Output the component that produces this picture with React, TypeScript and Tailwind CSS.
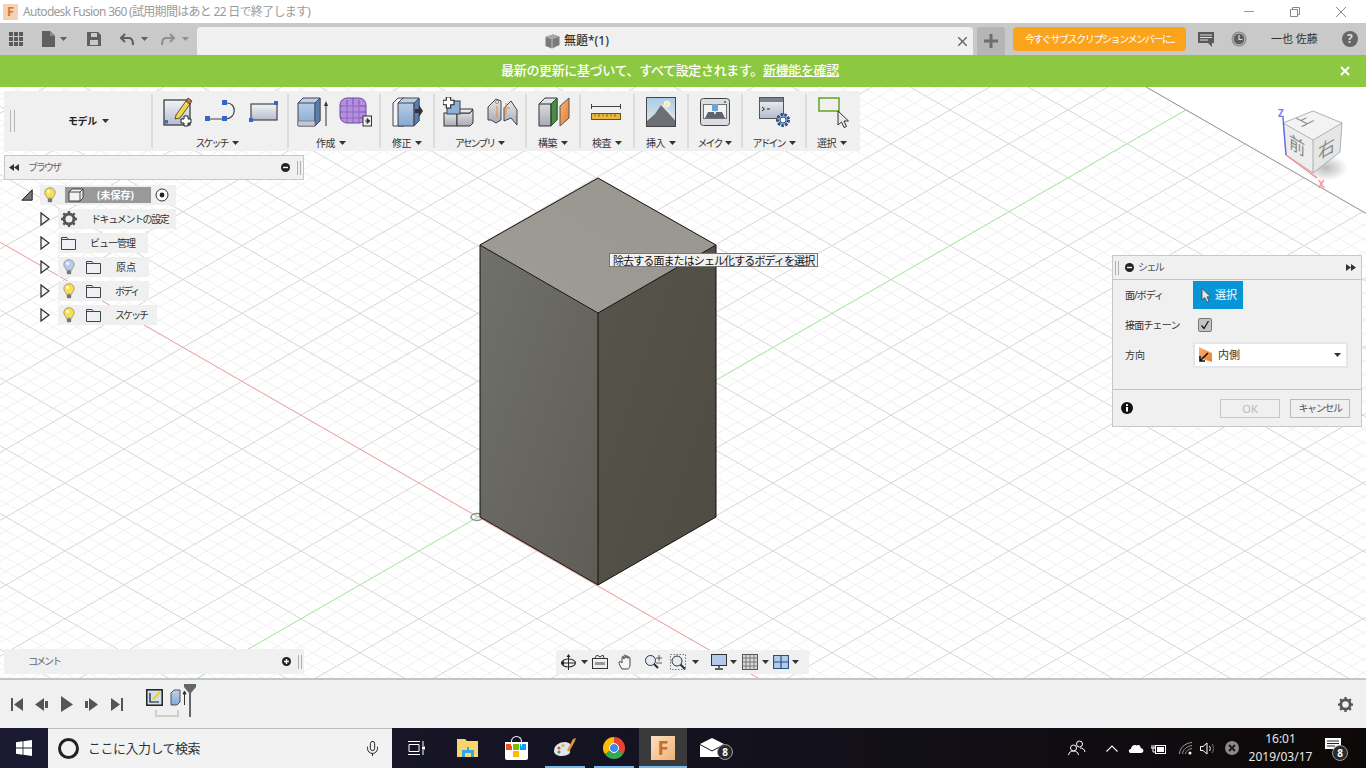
import React from "react";
import { Mic } from "lucide-react";

const O = { x: 478, y: 517 };
const K = 0.575;
const STEP = 11.8;
const LIMIT = 708;

// grid point from the two axes of the floor
const pt = (a: number, b: number) => ({ x: O.x + a + b, y: O.y + K * a - K * b });

const Seg = ({ a1, b1, a2, b2, color, width = 1 }: any) => {
  const p = pt(a1, b1);
  const q = pt(a2, b2);
  return <line x1={p.x} y1={p.y} x2={q.x} y2={q.y} stroke={color} strokeWidth={width} />;
};

const Floor = () => {
  const idx = Array.from({ length: 121 }, (_, i) => i - 60);
  return (
    <svg className="absolute inset-0" width="1366" height="593" viewBox="0 87 1366 593">
      <defs>
        <linearGradient id="faceTop" x1="0" y1="1" x2="1" y2="0">
          <stop offset="0" stopColor="#9e9c94" />
          <stop offset="1" stopColor="#98968e" />
        </linearGradient>
        <linearGradient id="faceLeft" x1="0" y1="0" x2="1" y2="1">
          <stop offset="0" stopColor="#70716a" />
          <stop offset="1" stopColor="#5e5d55" />
        </linearGradient>
        <linearGradient id="faceRight" x1="0" y1="0" x2="1" y2="1">
          <stop offset="0" stopColor="#57544c" />
          <stop offset="1" stopColor="#4e4b42" />
        </linearGradient>
      </defs>
      {idx.filter((i) => i % 5 !== 0).map((i) => (
        <g key={i}>
          <Seg a1={-LIMIT} b1={i * STEP} a2={LIMIT} b2={i * STEP} color="#f0f0f0" />
          <Seg a1={i * STEP} b1={-LIMIT} a2={i * STEP} b2={LIMIT} color="#f0f0f0" />
        </g>
      ))}
      {idx.filter((i) => i % 5 === 0).map((i) => (
        <g key={i}>
          <Seg a1={-LIMIT} b1={i * STEP} a2={LIMIT} b2={i * STEP} color="#d6d6d6" />
          <Seg a1={i * STEP} b1={-LIMIT} a2={i * STEP} b2={LIMIT} color="#d6d6d6" />
        </g>
      ))}
      <Seg a1={-LIMIT} b1={LIMIT} a2={LIMIT} b2={LIMIT} color="#9a9a9a" />
      <Seg a1={-LIMIT} b1={0} a2={LIMIT} b2={0} color="#f5a3a3" />
      <Seg a1={0} b1={-LIMIT} a2={0} b2={LIMIT} color="#a9f0a2" />
      <ellipse cx="477" cy="517" rx="6" ry="3.5" fill="none" stroke="#8d8d8d" strokeWidth="1.5" />
      <polygon points="598,178 716,245 598,313 480,245" fill="url(#faceTop)" />
      <polygon points="480,245 598,313 598,585 480,517" fill="url(#faceLeft)" />
      <polygon points="598,313 716,245 716,517 598,585" fill="url(#faceRight)" />
      <path d="M598 178L716 245V517L598 585L480 517V245ZM480 245L598 313L716 245M598 313V585" fill="none" stroke="#111" strokeWidth="1" />
    </svg>
  );
};

const Caret = ({ color = "#333", size = 7 }: { color?: string; size?: number }) => (
  <svg width={size} height={size - 3} viewBox="0 0 7 4" className="shrink-0">
    <path d="M0 0H7L3.5 4Z" fill={color} />
  </svg>
);

const Sheen = () => (
  <svg width="0" height="0" className="absolute">
    <defs>
      <linearGradient id="blueFace" x1="0" y1="0" x2="0" y2="1">
        <stop offset="0" stopColor="#c0d4ea" />
        <stop offset="1" stopColor="#86a9d2" />
      </linearGradient>
      <linearGradient id="paper" x1="0" y1="0" x2="0" y2="1">
        <stop offset="0" stopColor="#f2f4f8" />
        <stop offset="1" stopColor="#b4bccb" />
      </linearGradient>
      <linearGradient id="steel" x1="0" y1="0" x2="0" y2="1">
        <stop offset="0" stopColor="#e6e8ec" />
        <stop offset="1" stopColor="#a6aab2" />
      </linearGradient>
      <linearGradient id="sky" x1="0" y1="0" x2="0" y2="1">
        <stop offset="0" stopColor="#a9cde6" />
        <stop offset="1" stopColor="#e3e9e6" />
      </linearGradient>
      <linearGradient id="amber" x1="0" y1="0" x2="1" y2="1">
        <stop offset="0" stopColor="#f7b27c" />
        <stop offset="1" stopColor="#e77f2e" />
      </linearGradient>
    </defs>
  </svg>
);

const PlusMark = ({ x, y, s = 1 }: { x: number; y: number; s?: number }) => (
  <path
    transform={`translate(${x} ${y}) scale(${s})`}
    d="M3 0H7V3H10V7H7V10H3V7H0V3H3Z"
    fill="#fff"
    stroke="#222"
    strokeWidth="1"
  />
);

const SketchIcon = () => (
  <svg width="30" height="30" viewBox="0 0 30 30">
    <rect x="1" y="3" width="26" height="25" fill="url(#paper)" stroke="#333" strokeWidth="1.2" />
    <rect x="1.5" y="23" width="3.5" height="3.5" fill="#3a6fc9" />
    <path d="M13 18L23 4L27 7L17 21L12 22Z" fill="#f5d64a" stroke="#333" strokeWidth="0.8" />
    <path d="M23 4L25 1L29 4L27 7Z" fill="#c97a4a" stroke="#333" strokeWidth="0.8" />
    <PlusMark x={18} y={19} />
  </svg>
);

const LineIcon = () => (
  <svg width="32" height="24" viewBox="0 0 32 24">
    <path d="M3 19H20M20 3H22C32 3 32 19 20 19" fill="none" stroke="#444" strokeWidth="1.2" />
    <rect x="0" y="16" width="5" height="5" fill="#3566c4" />
    <rect x="17" y="16" width="5" height="5" fill="#3566c4" />
    <rect x="17" y="0" width="5" height="5" fill="#3566c4" />
  </svg>
);

const RectIcon = () => (
  <svg width="30" height="22" viewBox="0 0 30 22">
    <rect x="2" y="3" width="26" height="16" fill="url(#paper)" stroke="#444" strokeWidth="1.2" />
    <rect x="25" y="0" width="4" height="4" fill="#3566c4" />
    <rect x="0" y="17" width="4" height="4" fill="#3566c4" />
  </svg>
);

const BoxExtrude = () => (
  <svg width="32" height="30" viewBox="0 0 32 30">
    <path d="M1 6L6 1H23V24L18 29H1Z" fill="url(#blueFace)" stroke="#445" strokeWidth="1" />
    <path d="M1 6H18V29M18 6L23 1" fill="none" stroke="#445" strokeWidth="1" />
    <path d="M18 6L23 1V24L18 29Z" fill="#5a7fae" stroke="#445" strokeWidth="0.8" />
    <path d="M1 24H18V29H1Z" fill="#c5c8ce" stroke="#667" strokeWidth="0.6" />
    <path d="M29 29V6" stroke="#333" strokeWidth="1" />
    <path d="M27 9L29 4L31 9Z" fill="#333" />
  </svg>
);

const FormIcon = () => (
  <svg width="33" height="30" viewBox="0 0 33 30">
    <rect x="1" y="1" width="26" height="25" rx="7" fill="#b58ee0" stroke="#6d4aa0" strokeWidth="1" />
    <path d="M1 9H27M1 15H27M1 21H27M8 3V26M14 1V26M20 3V26" stroke="#6d4aa0" strokeWidth="0.9" />
    <path d="M3 7H21V25H9C5 25 3 23 3 19Z" fill="#b58ee0" fillOpacity="0.4" />
    <rect x="24" y="19" width="8.5" height="10" fill="#eee" stroke="#333" strokeWidth="1" />
    <path d="M26 24H29M28 21.5L31 24L28 26.5Z" fill="#333" stroke="#333" strokeWidth="0.8" />
  </svg>
);

const ModifyIcon = () => (
  <svg width="31" height="30" viewBox="0 0 31 30">
    <path d="M1 6L6 1H12V29H1Z" fill="#f3f3f3" stroke="#445" strokeWidth="1" />
    <path d="M6 6L11 1H27V24L22 29H6Z" fill="url(#blueFace)" stroke="#445" strokeWidth="1" />
    <path d="M22 6L27 1V24L22 29Z" fill="#5a7fae" stroke="#445" strokeWidth="0.8" />
    <path d="M6 6H22V29" fill="none" stroke="#445" strokeWidth="1" />
    <path d="M23 12H27V8L31 14L27 20V16H23Z" fill="#333" />
  </svg>
);

const AssemblyIcon = () => (
  <svg width="31" height="30" viewBox="0 0 31 30">
    <rect x="1" y="16" width="13" height="13" fill="url(#steel)" stroke="#333" strokeWidth="1" />
    <path d="M14 16H27L30 13V26L27 29H14Z" fill="url(#steel)" stroke="#333" strokeWidth="1" />
    <path d="M14 12L17 12H30L27 16H14Z" fill="#e8e8e8" stroke="#333" strokeWidth="1" />
    <rect x="4" y="4" width="13" height="13" fill="#8fb0d8" stroke="#345" strokeWidth="1" />
    <PlusMark x={0} y={0} s={1.1} />
  </svg>
);

const JointIcon = () => (
  <svg width="31" height="28" viewBox="0 0 31 28">
    <path d="M1 9L9 1L14 3V22L9 25L4 22L1 22Z" fill="url(#steel)" stroke="#444" strokeWidth="1" />
    <path d="M17 10L24 3L30 12V27L24 20L17 23Z" fill="url(#steel)" stroke="#444" strokeWidth="1" />
    <circle cx="10" cy="4" r="1.5" fill="#fff" stroke="#444" strokeWidth="0.6" />
    <path d="M10 8V20M19 5V17" stroke="#e98a3a" strokeWidth="1" />
    <path d="M16 10H23" stroke="#e98a3a" strokeWidth="1" />
  </svg>
);

const ConstructIcon = () => (
  <svg width="32" height="30" viewBox="0 0 32 30">
    <path d="M1 7L7 1H19V23L13 29H1Z" fill="url(#steel)" stroke="#333" strokeWidth="1" />
    <path d="M13 7L19 1V23L13 29Z" fill="#4d8a46" stroke="#2c5a28" strokeWidth="1" />
    <path d="M1 7H13V29" fill="none" stroke="#333" strokeWidth="1" />
    <path d="M22 9L31 1V21L22 29Z" fill="url(#amber)" stroke="#555" strokeWidth="1" />
  </svg>
);

const RulerIcon = () => (
  <svg width="30" height="18" viewBox="0 0 30 18">
    <path d="M0.5 1V6M29.5 1V6M0.5 3.5H29.5" stroke="#444" strokeWidth="1" />
    <rect x="0.5" y="10.5" width="29" height="6" fill="#eab63f" stroke="#6b5218" strokeWidth="1" />
    <path d="M4 11V13M8 11V14M12 11V13M16 11V14M20 11V13M24 11V14" stroke="#6b5218" strokeWidth="0.8" />
  </svg>
);

const PictureIcon = () => (
  <svg width="30" height="30" viewBox="0 0 30 30">
    <rect x="0.5" y="0.5" width="29" height="29" fill="url(#sky)" stroke="#444" strokeWidth="1" />
    <circle cx="21" cy="7" r="3" fill="#fbeab0" stroke="#fff" strokeWidth="0.8" />
    <path d="M1 24L9 17L15 8L29 23V29H1Z" fill="#6c7076" />
    <path d="M15 8L29 23V19L17 7Z" fill="#dfe1e2" />
  </svg>
);

const MakeIcon = () => (
  <svg width="30" height="28" viewBox="0 0 30 28">
    <rect x="0.5" y="0.5" width="29" height="27" rx="3" fill="#dcdde0" stroke="#444" strokeWidth="1" />
    <rect x="3.5" y="6.5" width="23" height="14" fill="#f2f3f5" stroke="#555" strokeWidth="0.8" />
    <path d="M5 20L8 14H22L25 20Z" fill="#5d6470" />
    <rect x="12" y="6" width="6" height="7" fill="#6ea2d3" />
    <path d="M15 13V16" stroke="#ddd" strokeWidth="2" />
    <rect x="24" y="3" width="2" height="2" fill="#2fa34a" />
  </svg>
);

const AddinIcon = () => (
  <svg width="31" height="30" viewBox="0 0 31 30">
    <rect x="0.5" y="0.5" width="24" height="21" fill="url(#paper)" stroke="#555" strokeWidth="1" />
    <rect x="1" y="1" width="23" height="4" fill="#7a808c" />
    <path d="M3 10L5.5 12L3 14M8 12H11" stroke="#222" strokeWidth="1" fill="none" />
    <circle cx="24" cy="23" r="5.5" fill="#a9c0e0" stroke="#2d4f86" strokeWidth="3" strokeDasharray="2.4 1.4" />
    <circle cx="24" cy="23" r="3" fill="#fff" stroke="#2d4f86" strokeWidth="1" />
  </svg>
);

const SelectIcon = () => (
  <svg width="31" height="31" viewBox="0 0 31 31">
    <rect x="1" y="1" width="20" height="13" fill="none" stroke="#5fa51c" strokeWidth="1.5" />
    <path d="M20 14V28L23.5 25L26 30.5L28.5 29.5L26 24H30.5Z" fill="#e8e8e8" stroke="#333" strokeWidth="1" />
  </svg>
);

const Section = ({ w, pl = 0, gap = 0, label, sep = true, kana = false, shift = 0, children }: any) => (
  <div className="flex shrink-0 h-full">
    <div className="flex flex-col" style={{ width: sep ? w - 2 : w }}>
      <div className="flex items-center h-[36px] mt-[3px]" style={{ paddingLeft: pl, gap }}>
        {children}
      </div>
      <div className="flex items-center justify-center gap-[4px] h-[16px] mt-[5px] text-[10px] leading-none text-[#333]" style={{ paddingRight: shift }}>
        <span className={kana ? "tracking-[-2px]" : "tracking-[-0.4px]"}>{label}</span>
        <Caret />
      </div>
    </div>
    {sep && <div className="w-[2px] h-[54px] mt-[3px] bg-[#dcdcdc]" />}
  </div>
);

const Toolbar = () => (
  <div className="absolute left-[4px] top-[4px] flex w-[856px] h-[60px] bg-[#f0f0f0]">
    <div className="flex shrink-0 h-full">
      <div className="flex items-center w-[147px]">
        <div className="w-[5px] h-[22px] ml-[6px] border-x border-[#b5b5b5]" />
        <div className="flex items-center gap-[5px] ml-[53px] text-[10px] font-bold text-[#222] tracking-[-0.4px]">
          <span>モデル</span>
          <Caret />
        </div>
      </div>
      <div className="w-[2px] h-[54px] mt-[3px] bg-[#dcdcdc]" />
    </div>
    <Section w={136} pl={10} gap={12} kana shift={6} label="スケッチ">
      <SketchIcon />
      <LineIcon />
      <RectIcon />
    </Section>
    <Section w={92} pl={8} gap={10} shift={6} label="作成">
      <BoxExtrude />
      <FormIcon />
    </Section>
    <Section w={54} pl={11} label="修正">
      <ModifyIcon />
    </Section>
    <Section w={92} pl={8} gap={13} kana label="アセンブリ">
      <AssemblyIcon />
      <JointIcon />
    </Section>
    <Section w={54} pl={11} label="構築">
      <ConstructIcon />
    </Section>
    <Section w={54} pl={10} label="検査">
      <RulerIcon />
    </Section>
    <Section w={54} pl={11} label="挿入">
      <PictureIcon />
    </Section>
    <Section w={54} pl={11} kana label="メイク">
      <MakeIcon />
    </Section>
    <Section w={64} pl={16} kana label="アドイン">
      <AddinIcon />
    </Section>
    <Section w={53} pl={11} sep={false} shift={3} label="選択">
      <SelectIcon />
    </Section>
  </div>
);

const Bulb = ({ fill = "#f9e04c" }: { fill?: string }) => (
  <svg width="12" height="16" viewBox="0 0 12 16" className="shrink-0">
    <path d="M6 0.7C2.8 0.7 0.8 3 0.8 5.6C0.8 8 2.8 9 3.4 11.2H8.6C9.2 9 11.2 8 11.2 5.6C11.2 3 9.2 0.7 6 0.7Z" fill={fill} stroke="#8b8b76" strokeWidth="0.8" />
    <circle cx="4.5" cy="4.5" r="1.6" fill="#fff" fillOpacity="0.8" />
    <rect x="3.8" y="11.5" width="4.4" height="3.8" rx="1" fill="#777" />
  </svg>
);

const Folder = () => (
  <svg width="15" height="13" viewBox="0 0 15 13" className="shrink-0">
    <path d="M0.5 12.5V0.5H6L7.5 2.5H14.5V12.5Z" fill="#eef0f5" stroke="#444" strokeWidth="1" />
    <path d="M0.5 2.5H7.5" stroke="#444" strokeWidth="1" />
  </svg>
);

const TreeArrow = () => (
  <svg width="10" height="14" viewBox="0 0 10 14" className="shrink-0">
    <path d="M1 1L9 7L1 13Z" fill="#f5f5f5" stroke="#333" strokeWidth="1.3" />
  </svg>
);

const Gear = ({ size = 16, color = "#555" }: { size?: number; color?: string }) => (
  <svg width={size} height={size} viewBox="0 0 16 16" className="shrink-0">
    <circle cx="8" cy="8" r="5" fill="none" stroke={color} strokeWidth="3" />
    <path d="M8 0V3M8 13V16M0 8H3M13 8H16M2.3 2.3L4.4 4.4M11.6 11.6L13.7 13.7M13.7 2.3L11.6 4.4M4.4 11.6L2.3 13.7" stroke={color} strokeWidth="2.4" />
  </svg>
);

const CircleMark = ({ plus = false }: { plus?: boolean }) => (
  <svg width="9" height="9" viewBox="0 0 9 9" className="shrink-0">
    <circle cx="4.5" cy="4.5" r="4.5" fill="#222" />
    <path d={plus ? "M2 4.5H7M4.5 2V7" : "M2 4.5H7"} stroke="#fff" strokeWidth="1.4" />
  </svg>
);

const Rewind = ({ flip = false }: { flip?: boolean }) => (
  <svg width="10" height="7" viewBox="0 0 10 7" className={flip ? "shrink-0 rotate-180" : "shrink-0"}>
    <path d="M0 3.5L5 0V7ZM5 3.5L10 0V7Z" fill="#333" />
  </svg>
);

const Grip = () => <div className="w-[4px] h-[14px] border-x border-[#b0b0b0] shrink-0" />;

const TreeRow = ({ width, text, textLeft, track, children }: any) => (
  <div className="flex items-center h-[20px] ml-[40px]">
    <TreeArrow />
    <div className="flex items-center h-full ml-[8px] bg-[#f0f0f0] relative" style={{ width }}>
      {children}
      <span className="absolute text-[10px] leading-none text-[#333] whitespace-nowrap" style={{ left: textLeft, letterSpacing: track }}>
        {text}
      </span>
    </div>
  </div>
);

const Browser = () => (
  <div className="absolute left-0 top-[68px] w-[310px]">
    <div className="flex items-center ml-[4px] w-[300px] h-[25px] bg-[#f0f0f0] border border-[#c8c8c8] pl-[4px] pr-[2px]">
      <Rewind />
      <span className="ml-[9px] text-[10px] text-[#666] tracking-[-2px]">ブラウザ</span>
      <div className="flex-1" />
      <CircleMark />
      <div className="ml-[7px]">
        <Grip />
      </div>
    </div>
    <div className="flex flex-col gap-[4px] mt-[5px]">
      <div className="flex items-center h-[20px] ml-[21px]">
        <svg width="12" height="12" viewBox="0 0 12 12" className="shrink-0">
          <path d="M0.8 11.2H11.2V0.8Z" fill="#777" stroke="#222" strokeWidth="1" />
        </svg>
        <div className="flex items-center w-[136px] h-full ml-[7px] bg-[#f0f0f0]">
          <div className="ml-[4px]">
            <Bulb />
          </div>
          <div className="flex items-center w-[86px] h-[16px] ml-[9px] bg-[#999]">
            <svg width="16" height="14" viewBox="0 0 16 14" className="ml-[3px]">
              <path d="M1 4L4 1H15V10L12 13H1Z" fill="#f2f2f2" stroke="#333" strokeWidth="0.9" />
              <path d="M12 13V4L15 1M1 4H12" fill="none" stroke="#333" strokeWidth="0.9" />
            </svg>
            <span className="ml-[13px] text-[10px] font-bold text-white leading-none">(未保存)</span>
          </div>
          <svg width="14" height="14" viewBox="0 0 14 14" className="ml-[4px]">
            <circle cx="7" cy="7" r="6" fill="#fff" stroke="#333" strokeWidth="1" />
            <circle cx="7" cy="7" r="2.4" fill="#222" />
          </svg>
        </div>
      </div>
      <TreeRow width={118} text="ドキュメントの設定" textLeft={33} track="-1.4px">
        <div className="ml-[3px]">
          <Gear />
        </div>
      </TreeRow>
      <TreeRow width={90} text="ビュー管理" textLeft={32} track="-1px">
        <div className="ml-[3px]">
          <Folder />
        </div>
      </TreeRow>
      <TreeRow width={91} text="原点" textLeft={58} track="0">
        <div className="ml-[5px]">
          <Bulb fill="#b5cdf3" />
        </div>
        <div className="ml-[11px]">
          <Folder />
        </div>
      </TreeRow>
      <TreeRow width={91} text="ボディ" textLeft={57} track="-2px">
        <div className="ml-[5px]">
          <Bulb />
        </div>
        <div className="ml-[11px]">
          <Folder />
        </div>
      </TreeRow>
      <TreeRow width={99} text="スケッチ" textLeft={57} track="-2px">
        <div className="ml-[5px]">
          <Bulb />
        </div>
        <div className="ml-[11px]">
          <Folder />
        </div>
      </TreeRow>
    </div>
  </div>
);

const ShellPanel = () => (
  <div className="absolute left-[1112px] top-[168px] w-[250px] h-[172px] bg-[#f0f0f0] border border-[#c8c8c8] text-[10px] text-[#333]">
    <div className="flex items-center h-[24px] border-b border-[#c4c4c4] pl-[2px] pr-[5px]">
      <Grip />
      <div className="ml-[6px]">
        <CircleMark />
      </div>
      <span className="ml-[4px] text-[#555] tracking-[-1.6px]">シェル</span>
      <div className="flex-1" />
      <Rewind flip />
    </div>
    <div className="flex items-center h-[30px] pl-[12px]">
      <span className="w-[68px] tracking-[-1px]">面/ボディ</span>
      <div className="flex items-center gap-[4px] w-[50px] h-[28px] pl-[8px] bg-[#0696d7] text-white text-[11px]">
        <svg width="10" height="15" viewBox="0 0 10 15">
          <path d="M1 0.5V12L3.8 9.6L6 14.2L8 13.2L6 8.8H9.6Z" fill="#e6e6e6" stroke="#345" strokeWidth="0.8" />
        </svg>
        <span>選択</span>
      </div>
    </div>
    <div className="flex items-center h-[30px] pl-[12px]">
      <span className="w-[73px] tracking-[-0.8px]">接面チェーン</span>
      <div className="flex items-center justify-center w-[14px] h-[14px] rounded-[2px] bg-[#c4c4c4] border border-[#777]">
        <svg width="10" height="10" viewBox="0 0 10 10">
          <path d="M1.5 5.5L4 8.5L8.5 1" fill="none" stroke="#111" strokeWidth="1.2" />
        </svg>
      </div>
    </div>
    <div className="flex items-center h-[30px] pl-[12px]">
      <span className="w-[68px]">方向</span>
      <div className="flex items-center w-[155px] h-[26px] pl-[3px] pr-[5px] bg-white border-2 border-[#e6e6e6] text-[11px]">
        <svg width="15" height="16" viewBox="0 0 15 16" className="shrink-0">
          <path d="M1 0L14 6V15L1 11Z" fill="url(#amber)" />
          <path d="M10 6L2 14M2 9V14H7" fill="none" stroke="#111" strokeWidth="1.6" />
        </svg>
        <span className="ml-[5px]">内側</span>
        <div className="flex-1" />
        <Caret />
      </div>
    </div>
    <div className="h-[20px] border-b border-[#c4c4c4]" />
    <div className="flex items-center h-[36px] pl-[8px]">
      <svg width="12" height="12" viewBox="0 0 12 12" className="shrink-0">
        <circle cx="6" cy="6" r="6" fill="#111" />
        <rect x="5" y="5" width="2" height="4.6" fill="#fff" />
        <rect x="5" y="2.2" width="2" height="1.8" fill="#fff" />
      </svg>
      <button className="w-[60px] h-[19px] ml-[87px] border border-[#c8c8c8] text-[11px] leading-none text-[#b8b8b8]">OK</button>
      <button className="w-[60px] h-[19px] ml-[10px] border border-[#bcbcbc] text-[10px] leading-none text-[#555] tracking-[-1.4px]">キャンセル</button>
    </div>
  </div>
);

const ViewCube = () => (
  <svg className="absolute left-[1270px] top-[15px]" width="78" height="95" viewBox="0 0 78 95">
    <defs>
      <radialGradient id="cubeShade" cx="0.5" cy="0.5" r="0.5">
        <stop offset="0" stopColor="#8d8d8d" stopOpacity="0.6" />
        <stop offset="1" stopColor="#8d8d8d" stopOpacity="0" />
      </radialGradient>
    </defs>
    <ellipse cx="56" cy="66" rx="22" ry="13" fill="url(#cubeShade)" />
    <polygon points="43,9 72,21 43,38 13,21" fill="#f3f3f3" />
    <polygon points="13,21 43,38 43,71 16,53" fill="#ededed" />
    <polygon points="43,38 72,21 70,50 43,71" fill="#e6e6e6" />
    <path d="M43 9L72 21L70 50L43 71L16 53L13 21ZM13 21L43 38L72 21M43 38V71" fill="none" stroke="#a0a0a0" strokeWidth="0.8" />
    <path d="M13 15L16 53" stroke="#6a6af0" strokeWidth="1.4" />
    <path d="M16 53L47 76" stroke="#f08c8c" strokeWidth="1.4" />
    <text x="8" y="15" fontSize="10" fontWeight="700" fill="#7c7cf0">Z</text>
    <text x="48" y="86" fontSize="10" fontWeight="700" fill="#f59c9c">X</text>
    <text transform="matrix(0.9 -0.45 0.9 0.45 31 25)" fontSize="15" fill="#888">上</text>
    <text transform="matrix(0.9 0.55 0 1 19 45)" fontSize="18" fill="#888">前</text>
    <text transform="matrix(0.95 -0.55 0 1 48 58)" fontSize="18" fill="#888">右</text>
  </svg>
);

const NavBar = () => (
  <div className="absolute left-[556px] top-[563px] flex items-center w-[253px] h-[24px] pl-[4px] bg-[#f0f0f0]">
    <svg width="17" height="17" viewBox="0 0 17 17">
      <path d="M8.5 1V16M1 9H16" stroke="#222" strokeWidth="1" />
      <ellipse cx="8.5" cy="9" rx="7" ry="4" fill="none" stroke="#333" strokeWidth="1.2" />
      <path d="M1 9L4 6.8V11.2ZM8.5 0L6.5 3H10.5Z" fill="#222" />
    </svg>
    <div className="ml-[4px]">
      <Caret />
    </div>
    <svg width="16" height="14" viewBox="0 0 16 14" className="ml-[4px]">
      <rect x="0.5" y="3.5" width="15" height="10" fill="#eee" stroke="#333" />
      <rect x="3" y="7" width="10" height="3" fill="#999" />
      <path d="M3 3L5 0L8 2L11 0L12 3" fill="none" stroke="#333" />
    </svg>
    <svg width="16" height="16" viewBox="0 0 16 16" className="ml-[10px]">
      <path d="M4 15C2 12 1 10 1 8C2 7 3 8 4 9V3C5 2 6 3 6 5V1.5C7 0.5 8 1.5 8 4V2C9 1 10 2 10 4.5V3C11 2.5 12 3 12 5V11C12 13 11 14 10 15Z" fill="#f5f5f5" stroke="#333" strokeWidth="0.9" />
    </svg>
    <svg width="18" height="16" viewBox="0 0 18 16" className="ml-[10px]">
      <circle cx="6.5" cy="6.5" r="5" fill="#e4ebf3" stroke="#333" />
      <path d="M10 10L14 14" stroke="#333" strokeWidth="2.2" />
      <path d="M12 4H18M15 1V7M12 9H18" stroke="#333" strokeWidth="0.8" />
    </svg>
    <svg width="17" height="16" viewBox="0 0 17 16" className="ml-[8px]">
      <rect x="0.5" y="0.5" width="15" height="15" fill="none" stroke="#777" strokeDasharray="1.5 1.5" />
      <circle cx="7" cy="7" r="5" fill="#e4ebf3" stroke="#333" />
      <path d="M10.5 10.5L15 15" stroke="#333" strokeWidth="2.2" />
    </svg>
    <div className="ml-[5px]">
      <Caret />
    </div>
    <svg width="16" height="16" viewBox="0 0 16 16" className="ml-[12px]">
      <rect x="0.5" y="0.5" width="15" height="11" fill="#b3cbe8" stroke="#333" />
      <path d="M8 12V14M4 15H12" stroke="#333" strokeWidth="1.4" />
    </svg>
    <div className="ml-[3px]">
      <Caret />
    </div>
    <svg width="16" height="16" viewBox="0 0 16 16" className="ml-[5px]">
      <rect x="0.5" y="0.5" width="15" height="15" fill="#d8d8d8" stroke="#555" />
      <path d="M4 0V16M8 0V16M12 0V16M0 4H16M0 8H16M0 12H16" stroke="#666" strokeWidth="0.8" />
    </svg>
    <div className="ml-[4px]">
      <Caret />
    </div>
    <svg width="16" height="14" viewBox="0 0 16 14" className="ml-[4px]">
      <path d="M0.5 0.5H15.5V13.5H0.5Z M8 0.5V13.5M0.5 7H15.5" fill="#b4cbe6" stroke="#2c4f86" strokeWidth="1.2" />
    </svg>
    <div className="ml-[3px]">
      <Caret />
    </div>
  </div>
);

const Canvas = () => (
  <div className="relative flex-1 bg-white overflow-hidden">
    <Floor />
    <Toolbar />
    <Browser />
    <ViewCube />
    <div className="absolute left-[609px] top-[166px] flex items-center w-[209px] h-[14px] pl-[3px] bg-[#f0f0f0] border border-[#777] text-[11px] leading-none text-[#111] tracking-[-0.9px] whitespace-nowrap">
      除去する面またはシェル化するボディを選択
    </div>
    <ShellPanel />
    <div className="absolute left-[4px] top-[562px] flex items-center w-[300px] h-[25px] bg-[#f0f0f0] pl-[24px] pr-[2px] text-[10px] text-[#666] tracking-[-2px]">
      <span>コメント</span>
      <div className="flex-1" />
      <CircleMark plus />
      <div className="ml-[7px]">
        <Grip />
      </div>
    </div>
    <NavBar />
  </div>
);

const TitleBar = () => (
  <div className="flex items-center h-[23px] bg-white shrink-0">
    <div className="flex items-center justify-center w-[15px] h-[16px] ml-[3px] bg-[#f6d2b4] text-[13px] font-bold leading-none text-[#d9782c]">F</div>
    <span className="ml-[5px] text-[12px] text-[#9b9b9b] whitespace-nowrap tracking-[-0.7px]">Autodesk Fusion 360 (試用期間はあと 22 日で終了します)</span>
    <div className="flex-1" />
    <div className="w-[10px] h-px bg-[#999] mr-[36px]" />
    <svg width="10" height="10" viewBox="0 0 10 10" className="mr-[36px]">
      <path d="M2.5 2.5V0.5H9.5V7.5H7.5M0.5 2.5H7.5V9.5H0.5Z" fill="none" stroke="#888" />
    </svg>
    <svg width="10" height="10" viewBox="0 0 10 10" className="mr-[20px]">
      <path d="M0 0L10 10M10 0L0 10" stroke="#888" />
    </svg>
  </div>
);

const AppBar = () => (
  <div className="flex h-[32px] bg-[#c9c9c9] shrink-0">
    <div className="flex items-center w-[197px] h-full pl-[9px] shrink-0">
      <svg width="14" height="14" viewBox="0 0 14 14">
        <path d="M0 0H4V4H0ZM5 0H9V4H5ZM10 0H14V4H10ZM0 5H4V9H0ZM5 5H9V9H5ZM10 5H14V9H10ZM0 10H4V14H0ZM5 10H9V14H5ZM10 10H14V14H10Z" fill="#5a5a5a" />
      </svg>
      <svg width="13" height="16" viewBox="0 0 13 16" className="ml-[19px]">
        <path d="M0 0H8L13 5V16H0Z" fill="#5f5f5f" />
        <path d="M8 0V5H13" fill="#8a8a8a" />
      </svg>
      <div className="ml-[5px]">
        <Caret color="#5f5f5f" />
      </div>
      <svg width="14" height="14" viewBox="0 0 14 14" className="ml-[20px]">
        <path d="M0 0H11L14 3V14H0ZM4 1V5H10V1ZM3 8V13H11V8Z" fill="#5f5f5f" fillRule="evenodd" />
      </svg>
      <svg width="14" height="13" viewBox="0 0 14 13" className="ml-[19px]">
        <path d="M5 1L1 5L5 9M1 5H9C12 5 13 7 13 12" fill="none" stroke="#5f5f5f" strokeWidth="2" />
      </svg>
      <div className="ml-[7px]">
        <Caret color="#5f5f5f" />
      </div>
      <svg width="14" height="13" viewBox="0 0 14 13" className="ml-[13px]">
        <path d="M9 1L13 5L9 9M13 5H5C2 5 1 7 1 12" fill="none" stroke="#8f8f8f" strokeWidth="2" />
      </svg>
      <div className="ml-[7px]">
        <Caret color="#8f8f8f" />
      </div>
    </div>
    <div className="relative flex items-center justify-center gap-[4px] w-[776px] h-[28px] mt-[4px] bg-[#f0f0f0] rounded-t-[4px] pr-[16px]">
      <svg width="15" height="15" viewBox="0 0 15 15">
        <path d="M0.5 3L8 0.5L14.5 2.5V11L7 14.5L0.5 12Z" fill="#7b7b7b" />
        <path d="M0.5 3L7 5.5L14.5 2.5L8 0.5Z" fill="#a8a8a8" />
        <path d="M7 5.5V14.5" stroke="#eee" strokeWidth="0.6" />
      </svg>
      <span className="text-[12px] font-medium text-[#333]">無題*(1)</span>
      <svg width="9" height="9" viewBox="0 0 9 9" className="absolute right-[6px] top-[10px]">
        <path d="M0 0L9 9M9 0L0 9" stroke="#666" strokeWidth="1.4" />
      </svg>
    </div>
    <div className="flex items-center justify-center w-[28px] h-[28px] mt-[4px] ml-[4px] bg-[#b5b5b5] rounded-t-[3px]">
      <svg width="14" height="14" viewBox="0 0 14 14">
        <path d="M5.5 0H8.5V5.5H14V8.5H8.5V14H5.5V8.5H0V5.5H5.5Z" fill="#6d6d6d" />
      </svg>
    </div>
    <div className="flex items-center justify-center w-[173px] h-[24px] mt-[4px] ml-[8px] bg-[#fca31c] rounded-[4px] text-[10px] text-white whitespace-nowrap tracking-[-1.4px]">
      今すぐサブスクリプションメンバーに...
    </div>
    <svg width="16" height="15" viewBox="0 0 16 15" className="ml-[12px] mt-[9px]">
      <path d="M0 0H16V11H14V15L10 11H0Z" fill="#5a5a5a" />
      <path d="M2 3H14M2 5.5H14M2 8H10" stroke="#ddd" />
    </svg>
    <svg width="16" height="16" viewBox="0 0 16 16" className="ml-[17px] mt-[8px]">
      <circle cx="8" cy="8" r="7.5" fill="#8b8b8b" />
      <circle cx="8" cy="8" r="5.8" fill="#5e5e5e" stroke="#c9c9c9" strokeWidth="0.8" />
      <path d="M8 4V8.5H11.5" fill="none" stroke="#ddd" strokeWidth="1.2" />
    </svg>
    <span className="flex items-center ml-[24px] text-[11px] text-[#333] whitespace-nowrap">一也 佐藤</span>
    <div className="flex items-center justify-center w-[16px] h-[16px] mt-[8px] ml-[24px] rounded-full bg-[#666] text-[12px] font-bold leading-none text-[#ddd]">?</div>
  </div>
);

const Banner = () => (
  <div className="relative flex items-center justify-center h-[32px] pr-[26px] bg-[#8dc843] text-[13px] font-medium text-white tracking-[-0.35px] shrink-0">
    <span>
      最新の更新に基づいて、すべて設定されます。<span className="underline">新機能を確認</span>
    </span>
    <svg width="10" height="10" viewBox="0 0 10 10" className="absolute right-[16px] top-[11px]">
      <path d="M1 1L9 9M9 1L1 9" stroke="#fff" strokeWidth="2" />
    </svg>
  </div>
);

const Timeline = () => (
  <div className="flex items-center h-[50px] bg-[#f0f0f0] border-t-2 border-[#c4c4c4] shrink-0 pl-[11px] pr-[13px]">
    <svg width="113" height="16" viewBox="0 0 113 16" className="shrink-0">
      <path d="M0 2H2V15H0ZM12 2V15L3 8.5Z" fill="#555" />
      <path d="M24 8.5L33 2V15ZM34 5H37V12H34Z" fill="#555" />
      <path d="M50 0L62 8.5L50 16Z" fill="#555" />
      <path d="M74 5H77V12H74ZM78 2L87 8.5L78 15Z" fill="#555" />
      <path d="M100 2L109 8.5L100 15ZM110 2H112V15H110Z" fill="#555" />
    </svg>
    <div className="relative w-[60px] h-[40px] ml-[22px] shrink-0">
      <svg width="17" height="17" viewBox="0 0 17 17" className="absolute left-0 top-[5px]">
        <rect x="0.8" y="0.8" width="15.4" height="15.4" fill="#cfe0f3" stroke="#111" strokeWidth="1.4" />
        <path d="M4 4V13H13" fill="none" stroke="#111" strokeWidth="1.2" />
        <path d="M6 10L13 2L15 4L8 11Z" fill="#f0cf3c" />
      </svg>
      <svg width="17" height="17" viewBox="0 0 17 17" className="absolute left-[24px] top-[5px]">
        <path d="M1 4L4 1H10V13L7 16H1Z" fill="url(#blueFace)" stroke="#445" strokeWidth="0.9" />
        <path d="M14.5 16V3M13 5L14.5 2L16 5Z" stroke="#333" fill="#333" />
      </svg>
      <div className="absolute left-[9px] top-[26px] w-[24px] h-[7px] border-x-2 border-b-2 border-[#cfcfcf]" />
      <svg width="12" height="33" viewBox="0 0 12 33" className="absolute left-[38px] top-0">
        <path d="M0 0H12V3L7 9V33H5V9L0 3Z" fill="#666" />
      </svg>
    </div>
    <div className="flex-1" />
    <Gear size={15} color="#555" />
  </div>
);

const Badge = ({ className }: { className: string }) => (
  <div className={`absolute flex items-center justify-center w-[16px] h-[16px] rounded-full bg-[#2a2a2a] border border-[#9a9a9a] text-[10px] font-bold leading-none text-white ${className}`}>8</div>
);

const Taskbar = () => (
  <div className="flex items-center h-[40px] bg-gradient-to-r from-[#1b1a33] via-[#14121f] to-[#0d0908] shrink-0 text-white">
    <div className="flex items-center justify-center w-[48px] h-full shrink-0">
      <svg width="16" height="16" viewBox="0 0 16 16">
        <path d="M0 2.2L6.6 1.3V7.6H0ZM7.4 1.2L16 0V7.6H7.4ZM0 8.4H6.6V14.7L0 13.8ZM7.4 8.4H16V16L7.4 14.8Z" fill="#fff" />
      </svg>
    </div>
    <div className="flex items-center w-[344px] h-full bg-[#f2f2f2] border-t border-[#bcbcbc] shrink-0 pl-[10px]">
      <div className="w-[21px] h-[21px] rounded-full border-[3px] border-[#222]" />
      <span className="ml-[9px] text-[13px] text-[#333] tracking-[-0.5px]">ここに入力して検索</span>
      <div className="flex-1" />
      <Mic size={17} strokeWidth={1.4} className="mr-[11px] text-[#222]" />
    </div>
    <svg width="17" height="14" viewBox="0 0 17 14" className="ml-[16px] shrink-0">
      <path d="M0 0.5H12M0 13.5H12M1 3.5H11V10.5H1ZM15 0V5M15 9V14" fill="none" stroke="#fff" strokeWidth="1" />
      <rect x="14" y="5.5" width="3" height="3" fill="#fff" />
    </svg>
    <div className="flex items-center justify-center w-[48px] h-full ml-[19px]">
      <svg width="22" height="20" viewBox="0 0 22 20">
        <path d="M0 1H8L10 3H21V19H0Z" fill="#f6d66d" />
        <path d="M5 19V12H10V9H12V12H17V19H14V15H8V19Z" fill="#30a8ea" />
      </svg>
    </div>
    <div className="flex items-center justify-center w-[48px] h-full">
      <div className="relative flex flex-wrap gap-[1px] content-center justify-center w-[23px] h-[18px] mt-[5px] bg-white rounded-b-[2px]">
        <div className="absolute -top-[6px] left-[6px] w-[11px] h-[10px] rounded-t-full border border-white border-b-0" />
        <div className="w-[6px] h-[6px] bg-[#f25022]" />
        <div className="w-[6px] h-[6px] bg-[#7fba00]" />
        <div className="w-[6px] h-[6px] bg-[#00a4ef]" />
        <div className="w-[6px] h-[6px] bg-[#ffb900]" />
      </div>
    </div>
    <div className="relative flex items-center justify-center w-[49px] h-full">
      <svg width="24" height="24" viewBox="0 0 24 24">
        <path d="M1 15C1 9 7 6 12 6C17 6 19 10 17 12C15 14 19 15 16 18C12 21 1 21 1 15Z" fill="#dfe7ee" />
        <circle cx="6" cy="12" r="1.6" fill="#d7553f" />
        <circle cx="10" cy="9.5" r="1.6" fill="#e0b53a" />
        <circle cx="6" cy="16" r="1.6" fill="#5aa14d" />
        <path d="M14 14L20 3L23 2L22 5L16 16Z" fill="#d99a3d" />
      </svg>
      <div className="absolute bottom-0 left-[5px] w-[40px] h-[2px] bg-[#76b9ed]" />
    </div>
    <div className="relative flex items-center justify-center w-[50px] h-full">
      <div className="w-[22px] h-[22px] rounded-full bg-[conic-gradient(#ea4335_0_33%,#34a853_33%_66%,#fbbc05_66%_100%)] flex items-center justify-center">
        <div className="w-[10px] h-[10px] rounded-full bg-[#4285f4] border border-white" />
      </div>
      <div className="absolute bottom-0 left-[5px] w-[40px] h-[2px] bg-[#76b9ed]" />
    </div>
    <div className="relative flex items-center justify-center w-[48px] h-full bg-[#3a3a3c]">
      <div className="flex items-center justify-center w-[24px] h-[24px] bg-gradient-to-br from-[#fbe0c4] to-[#f0b073] text-[20px] font-bold leading-none text-[#c96f1f]">F</div>
      <div className="absolute bottom-0 left-0 w-full h-[2px] bg-[#76b9ed]" />
    </div>
    <div className="relative w-[24px] h-[20px] ml-[13px]">
      <svg width="24" height="19" viewBox="0 0 24 19">
        <path d="M0 6L12 0L24 6V19H0Z" fill="#fff" />
        <path d="M0 6.5L12 13L24 6.5" fill="none" stroke="#14121f" strokeWidth="1" />
      </svg>
      <Badge className="left-[17px] top-[6px]" />
    </div>
    <div className="flex-1" />
    <svg width="18" height="16" viewBox="0 0 18 16">
      <circle cx="11.5" cy="4" r="3" fill="none" stroke="#fff" />
      <circle cx="5.5" cy="8" r="3" fill="none" stroke="#fff" />
      <path d="M0.5 15C1 12 3 11 5.5 11C8 11 10 12 10.5 15M12 8C14.5 8 16.5 9 17 12" fill="none" stroke="#fff" />
    </svg>
    <svg width="12" height="7" viewBox="0 0 12 7" className="ml-[20px]">
      <path d="M0.5 6.5L6 1L11.5 6.5" fill="none" stroke="#fff" strokeWidth="1.1" />
    </svg>
    <svg width="16" height="10" viewBox="0 0 16 10" className="ml-[10px]">
      <path d="M3.5 10C0 10 0 6 3 6C3 3 6 1 8.5 2.5C11 1 13 3 12.5 5C16 5 16.5 10 13 10Z" fill="#fff" />
    </svg>
    <svg width="15" height="11" viewBox="0 0 15 11" className="ml-[7px]">
      <rect x="4.5" y="2.5" width="10" height="8" fill="none" stroke="#fff" />
      <rect x="6" y="4" width="7" height="5" fill="#fff" />
      <path d="M0 5H4M1 2V5M3 2V5M2 5V9H4" fill="none" stroke="#fff" />
    </svg>
    <svg width="14" height="13" viewBox="0 0 14 13" className="ml-[13px]">
      <path d="M0.5 12C0.5 6 6 1 13 0.5M3.5 12C3.5 8 8 4 13 3.5M6.5 12C6.5 10 9 7 13 6.5" fill="none" stroke="#9d9d9d" />
      <circle cx="11" cy="11" r="1.5" fill="#fff" />
    </svg>
    <svg width="16" height="13" viewBox="0 0 16 13" className="ml-[7px]">
      <path d="M0.5 4.5H3L7 1V12L3 8.5H0.5Z" fill="none" stroke="#fff" />
      <path d="M9.5 4C10.5 5.5 10.5 7.5 9.5 9" fill="none" stroke="#fff" />
      <path d="M12 2C14 4.5 14 8.5 12 11" fill="none" stroke="#777" />
    </svg>
    <svg width="14" height="14" viewBox="0 0 14 14" className="ml-[9px]">
      <circle cx="7" cy="7" r="7" fill="#8b8b8b" />
      <path d="M4 4L10 10M10 4L4 10" stroke="#1a1a1a" strokeWidth="1.8" />
    </svg>
    <div className="flex flex-col items-center w-[57px] ml-[13px] text-[12px] leading-[18px] text-[#e6e6e6] whitespace-nowrap">
      <span>16:01</span>
      <span>2019/03/17</span>
    </div>
    <div className="relative w-[16px] h-[14px] ml-[16px] mr-[25px] -mt-[6px]">
      <svg width="16" height="14" viewBox="0 0 16 14">
        <path d="M0 0H16V11H10L8 14V11H0Z" fill="#fff" />
        <path d="M2 3H14M2 5.5H14M2 8H10" stroke="#222" />
      </svg>
      <Badge className="left-[7px] top-[7px]" />
    </div>
  </div>
);

export default function App() {
  return (
    <div className="flex flex-col w-[1366px] h-[768px] overflow-hidden bg-white font-['Noto_Sans','Noto_Sans_CJK_JP',sans-serif]">
      <Sheen />
      <TitleBar />
      <AppBar />
      <Banner />
      <Canvas />
      <Timeline />
      <Taskbar />
    </div>
  );
}
